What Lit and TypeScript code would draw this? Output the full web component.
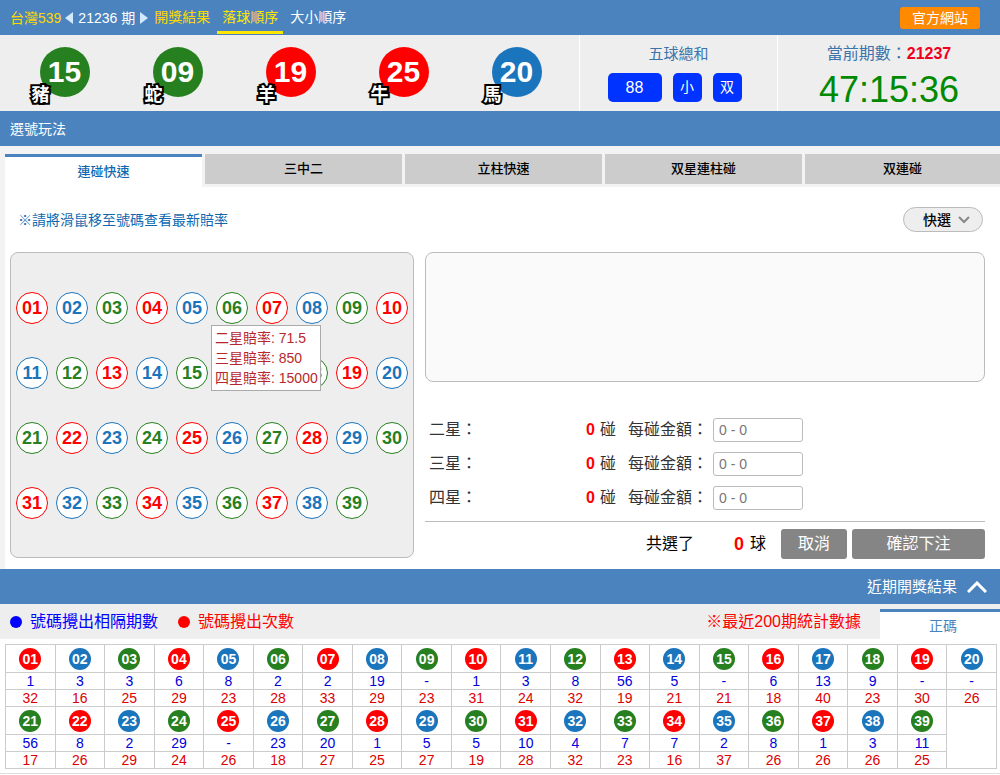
import { LitElement, html, css, svg } from "lit";
import { customElement, state } from "lit/decorators.js";
import { classMap } from "lit/directives/class-map.js";

type Tone = "red" | "blue" | "green";

const RED = [1, 4, 7, 10, 13, 16, 19, 22, 25, 28, 31, 34, 37];
const BLUE = [2, 5, 8, 11, 14, 17, 20, 23, 26, 29, 32, 35, 38];

const toneOf = (n: number): Tone =>
  RED.includes(n) ? "red" : BLUE.includes(n) ? "blue" : "green";

const pad = (n: number) => String(n).padStart(2, "0");

const DRAW = [
  { n: 15, sign: "豬" },
  { n: 9, sign: "蛇" },
  { n: 19, sign: "羊" },
  { n: 25, sign: "牛" },
  { n: 20, sign: "馬" },
];

const TABS = ["連碰快速", "三中二", "立柱快速", "双星連柱碰", "双連碰"];
const STARS = ["二星", "三星", "四星"];
const ODDS = ["二星賠率: 71.5", "三星賠率: 850", "四星賠率: 15000"];

const GAPS = [
  "1", "3", "3", "6", "8", "2", "2", "19", "-", "1", "3", "8", "56", "5", "-", "6", "13", "9", "-", "-",
  "56", "8", "2", "29", "-", "23", "20", "1", "5", "5", "10", "4", "7", "7", "2", "8", "1", "3", "11",
];
const HITS = [
  32, 16, 25, 29, 23, 28, 33, 29, 23, 31, 24, 32, 19, 21, 21, 18, 40, 23, 30, 26,
  17, 26, 29, 24, 26, 18, 27, 25, 27, 19, 28, 32, 23, 16, 37, 26, 26, 26, 25,
];

@customElement("app-root")
export class AppRoot extends LitElement {
  @state() private tab = 0;
  @state() private hovered = 6;

  static styles = css`
    :host {
      display: block;
      min-height: 100vh;
      background: #fff;
      color: #000;
      font-family: "Liberation Sans", "Noto Sans CJK TC", sans-serif;
      font-size: 14px;
      line-height: 20px;
      --bar: #4a83bd;
      --red: #ff0000;
      --blue: #1b75bc;
      --green: #27801f;
    }
    * { box-sizing: border-box; }
    button, input {
      font: inherit;
      color: inherit;
      margin: 0;
      padding: 0;
      border: 0;
      background: none;
    }
    button { cursor: pointer; }
    a { color: inherit; text-decoration: none; }
    svg { display: block; }
    .red { --tone: var(--red); }
    .blue { --tone: var(--blue); }
    .green { --tone: var(--green); }

    .bar {
      display: flex;
      align-items: center;
      height: 35px;
      padding: 0 10px;
      background: var(--bar);
      color: #fff;
    }
    .yellow { color: #ffd800; }
    .period { display: flex; align-items: center; gap: 5px; margin: 0 6px 0 4px; }
    .links { display: flex; align-self: stretch; }
    .link {
      display: flex;
      align-items: center;
      height: 34px;
      padding: 3px 5px 0;
      margin-right: 2px;
      border-bottom: 3px solid transparent;
    }
    .link.first { padding-left: 0; }
    .link.on { border-color: #ffe600; color: #ffe600; }
    .official {
      margin-left: auto;
      margin-right: 10px;
      padding: 1px 12px;
      border-radius: 3px;
      background: #ff8a00;
    }

    .summary {
      display: grid;
      grid-template-columns: 579fr 198fr 223fr;
      height: 76px;
      background: #eee;
    }
    .draw {
      display: grid;
      grid-template-columns: repeat(5, 1fr);
      align-items: center;
      justify-items: center;
      padding: 0 6px 2px 8px;
    }
    .big {
      position: relative;
      width: 50px;
      height: 50px;
      border-radius: 50%;
      background: var(--tone);
      color: #fff;
      font: bold 30px/50px "Liberation Sans", sans-serif;
      text-align: center;
    }
    .sign {
      position: absolute;
      left: -8px;
      bottom: -6px;
      font: bold 18px/20px "Noto Sans CJK TC", sans-serif;
      -webkit-text-stroke: 4px #000;
      paint-order: stroke fill;
    }
    .info {
      display: flex;
      flex-direction: column;
      align-items: center;
      padding-top: 9px;
      border-left: 1px solid #fff;
      color: #3b74ab;
    }
    .info-title { font-size: 15px; }
    .info-period { font-size: 16px; }
    .info-period strong { color: #f0001c; }
    .sums { display: flex; gap: 11px; padding: 9px 8px 0 0; }
    .sum {
      min-width: 29px;
      border-radius: 5px;
      background: #0033ff;
      color: #fff;
      line-height: 29px;
      text-align: center;
    }
    .sum.wide { min-width: 54px; font-size: 16px; }
    .clock {
      padding-top: 6px;
      font-size: 36px;
      line-height: 40px;
      color: #008a00;
    }

    .play { padding-left: 5px; background: #f3f3f3; }
    .tabs {
      display: grid;
      grid-template-columns: repeat(4, 197fr) 195fr;
      gap: 3px;
      height: 41px;
      padding-top: 8px;
    }
    .tab { height: 30px; background: #ccc; font-size: 13px; font-weight: 500; }
    .tab.on {
      height: 33px;
      border-top: 3px solid var(--bar);
      background: #fff;
      color: #1069b0;
    }
    .panel { padding: 20px 15px 10px 5px; background: #fff; }
    .tip { display: flex; justify-content: space-between; align-items: center; padding: 0 2px 0 8px; }
    .tip p { margin: 0; color: #1069b0; }
    .quick {
      display: flex;
      align-items: center;
      justify-content: flex-end;
      gap: 7px;
      width: 80px;
      height: 25px;
      padding-right: 12px;
      border: 1px solid #bbb;
      border-radius: 13px;
      background: #eee;
      font-weight: 500;
    }
    .work { display: flex; gap: 11px; padding-top: 20px; }

    .pad {
      display: grid;
      grid-template-columns: repeat(10, 40px);
      grid-auto-rows: 65px;
      align-content: center;
      align-items: center;
      justify-items: center;
      justify-content: center;
      width: 404px;
      height: 306px;
      border: 1px solid #bbb;
      border-radius: 8px;
      background: #eee;
    }
    .cell { position: relative; }
    .num {
      display: block;
      width: 32px;
      height: 32px;
      border: 1px solid var(--tone);
      border-radius: 50%;
      background: #fff;
      color: var(--tone);
      font-size: 18px;
      line-height: 30px;
      font-weight: bold;
    }
    .odds {
      position: absolute;
      z-index: 1;
      top: 33px;
      left: -5px;
      padding: 2px 2px 2px 3px;
      border: 1px solid #aaa;
      background: #fff;
      color: #b7282d;
      white-space: nowrap;
    }
    .odds div { height: 20px; }

    .slip { flex: 1; display: flex; flex-direction: column; font-size: 16px; }
    .picked { height: 130px; border: 1px solid #bbb; border-radius: 8px; background: #fafafa; }
    .stakes {
      display: flex;
      flex-direction: column;
      gap: 10px;
      padding: 36px 0 11px 4px;
      border-bottom: 1px solid #bbb;
      color: #333;
    }
    .stake { display: flex; align-items: center; height: 24px; line-height: 22px; }
    .star { width: 100px; }
    .count { width: 66px; margin-right: 5px; text-align: right; font-weight: bold; color: var(--red); }
    .unit { margin-right: 12px; }
    .amount {
      width: 90px;
      height: 24px;
      margin-left: 5px;
      padding: 0 5px;
      border: 1px solid #bbb;
      border-radius: 3px;
      background: #fff;
      font-size: 14px;
    }
    .amount::placeholder { color: #777; opacity: 1; }
    .submit { display: flex; align-items: center; justify-content: flex-end; padding-top: 7px; }
    .total { margin: 0 6px 0 40px; font-size: 18px; font-weight: bold; color: var(--red); }
    .action {
      height: 30px;
      border-radius: 3px;
      background: #858585;
      color: #fff;
    }
    .action.cancel { width: 66px; margin: 0 5px 0 15px; }
    .action.confirm { width: 133px; }

    .recent { justify-content: flex-end; font-size: 15px; gap: 10px; padding-right: 13px; }
    .legend {
      display: flex;
      align-items: center;
      height: 35px;
      padding-left: 10px;
      background: #eee;
      font-size: 16px;
    }
    .key { display: flex; align-items: center; gap: 8px; margin-right: 20px; color: #0000ff; }
    .key.hits { color: var(--red); }
    .dot { width: 12px; height: 12px; border-radius: 50%; background: currentColor; }
    .note { margin-left: auto; padding-right: 19px; color: var(--red); }
    .main-tab {
      align-self: flex-end;
      width: 120px;
      height: 30px;
      padding-left: 6px;
      border-top: 3px solid var(--bar);
      background: #fff;
      color: var(--bar);
      font-size: 14px;
    }
    .stats { padding: 5px 3px 4px 5px; border-bottom: 1px solid #ddd; }
    .table { width: 100%; border-collapse: collapse; table-layout: fixed; border: 1px solid #ccc; }
    .table td { height: 17px; padding: 0; border: 1px solid #ccc; line-height: 16px; text-align: center; }
    .table .ball-cell { height: 28px; }
    .small {
      display: block;
      width: 22px;
      height: 22px;
      margin: 0 auto;
      border-radius: 50%;
      background: var(--tone);
      color: #fff;
      line-height: 22px;
      font-weight: bold;
    }
    .gap { color: #0000dd; }
    .hit { color: #dd0000; }
  `;

  private renderHeader() {
    return html`
      <header class="bar">
        <span class="yellow">台灣539</span>
        <span class="period">
          <svg width="8" height="12" viewBox="0 0 8 12">${svg`<path d="M8 0v12L0 6z" fill="#d3e9ff" />`}</svg>
          <span>21236 期</span>
          <svg width="8" height="12" viewBox="0 0 8 12">${svg`<path d="M0 0v12l8-6z" fill="#d3e9ff" />`}</svg>
        </span>
        <nav class="links">
          <a class="link first yellow" href="#results">開獎結果</a>
          <a class="link on" href="#order">落球順序</a>
          <a class="link" href="#size">大小順序</a>
        </nav>
        <a class="official" href="#official">官方網站</a>
      </header>
    `;
  }

  private renderSummary() {
    return html`
      <section class="summary">
        <div class="draw">
          ${DRAW.map(
            (d) => html`<div class="big ${toneOf(d.n)}">${pad(d.n)}<span class="sign">${d.sign}</span></div>`
          )}
        </div>
        <div class="info">
          <div class="info-title">五球總和</div>
          <div class="sums">
            <span class="sum wide">88</span><span class="sum">小</span><span class="sum">双</span>
          </div>
        </div>
        <div class="info">
          <div class="info-period">當前期數：<strong>21237</strong></div>
          <div class="clock">47:15:36</div>
        </div>
      </section>
    `;
  }

  private renderPad() {
    return html`
      <div class="pad">
        ${Array.from({ length: 39 }, (_, i) => i + 1).map(
          (n) => html`
            <div class="cell">
              <button class="num ${toneOf(n)}" @mouseenter=${() => (this.hovered = n)}>${pad(n)}</button>
              ${n === this.hovered
                ? html`<div class="odds" role="tooltip">${ODDS.map((o) => html`<div>${o}</div>`)}</div>`
                : null}
            </div>
          `
        )}
      </div>
    `;
  }

  private renderSlip() {
    return html`
      <div class="slip">
        <div class="picked"></div>
        <div class="stakes">
          ${STARS.map(
            (s, i) => html`
              <div class="stake">
                <span class="star">${s}：</span>
                <span class="count">0</span>
                <span class="unit">碰</span>
                <label for="amount-${i}">每碰金額：</label>
                <input class="amount" id="amount-${i}" type="text" placeholder="0 - 0" />
              </div>
            `
          )}
        </div>
        <div class="submit">
          <span>共選了</span><span class="total">0</span><span>球</span>
          <button class="action cancel">取消</button>
          <button class="action confirm">確認下注</button>
        </div>
      </div>
    `;
  }

  private renderStatRows(from: number, to: number) {
    const nums = Array.from({ length: to - from + 1 }, (_, i) => from + i);
    return html`
      <tr>
        ${nums.map((n) => html`<td class="ball-cell"><span class="small ${toneOf(n)}">${pad(n)}</span></td>`)}
        ${nums.length < 20 ? html`<td rowspan="3"></td>` : null}
      </tr>
      <tr>${nums.map((n) => html`<td class="gap">${GAPS[n - 1]}</td>`)}</tr>
      <tr>${nums.map((n) => html`<td class="hit">${HITS[n - 1]}</td>`)}</tr>
    `;
  }

  render() {
    return html`
      ${this.renderHeader()} ${this.renderSummary()}
      <div class="bar">選號玩法</div>
      <main class="play">
        <div class="tabs" role="tablist">
          ${TABS.map(
            (t, i) => html`
              <button
                role="tab"
                aria-selected=${i === this.tab}
                class=${classMap({ tab: true, on: i === this.tab })}
                @click=${() => (this.tab = i)}
              >${t}</button>
            `
          )}
        </div>
        <div class="panel">
          <div class="tip">
            <p>※請將滑鼠移至號碼查看最新賠率</p>
            <button class="quick">
              快選
              <svg width="12" height="8" viewBox="0 0 12 8">
                <path d="M1 1l5 5 5-5" fill="none" stroke="#888" stroke-width="2" />
              </svg>
            </button>
          </div>
          <div class="work">${this.renderPad()} ${this.renderSlip()}</div>
        </div>
      </main>
      <div class="bar recent">
        近期開獎結果
        <svg width="20" height="12" viewBox="0 0 20 12">
          <path d="M1 11l9-9 9 9" fill="none" stroke="#fff" stroke-width="3" />
        </svg>
      </div>
      <div class="legend">
        <span class="key"><i class="dot"></i>號碼攪出相隔期數</span>
        <span class="key hits"><i class="dot"></i>號碼攪出次數</span>
        <span class="note">※最近200期統計數據</span>
        <button class="main-tab">正碼</button>
      </div>
      <div class="stats">
        <table class="table">
          <tbody>
            ${this.renderStatRows(1, 20)} ${this.renderStatRows(21, 39)}
          </tbody>
        </table>
      </div>
    `;
  }
}
